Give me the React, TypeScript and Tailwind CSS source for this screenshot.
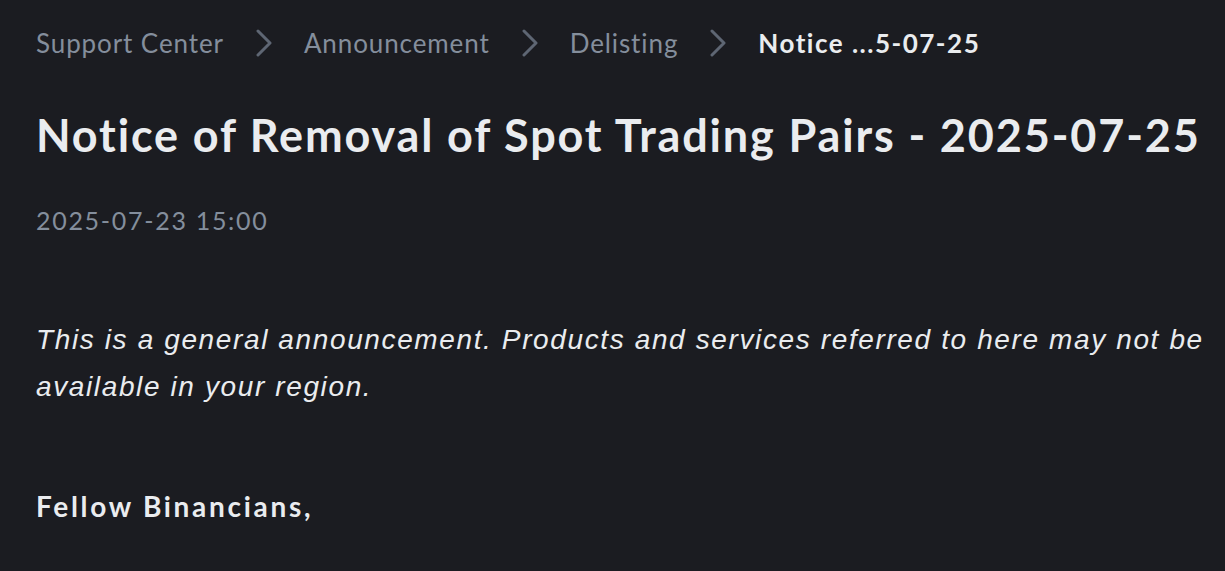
import React from 'react';

const Chevron = () => (
  <svg width="16" height="28" viewBox="0 0 16 28" fill="none" className="shrink-0">
    <path d="M2 2 L14 14 L2 26" stroke="#5E6673" strokeWidth="3" strokeLinecap="round" strokeLinejoin="round" />
  </svg>
);

const crumbs = ['Support Center', 'Announcement', 'Delisting'];

export default function App() {
  return (
    <div className="min-h-[571px] w-full bg-[#1b1c21] pl-[36px] pr-[16px] text-[#eaecef]" style={{ fontFamily: 'Lato, "Noto Sans", sans-serif' }}>
      {/* Breadcrumb */}
      <nav className="flex h-[86px] items-center gap-[32px] text-[26px] tracking-[0.9px]">
        {crumbs.map((c) => (
          <React.Fragment key={c}>
            <span className="text-[#848e9c]">{c}</span>
            <Chevron />
          </React.Fragment>
        ))}
        <span className="font-bold tracking-[1.5px] text-[#eaecef]">Notice ...5-07-25</span>
      </nav>

      {/* Title */}
      <h1 className="mt-[21px] text-[45px] font-bold leading-[56px] tracking-[1.85px]">
        Notice of Removal of Spot Trading Pairs - 2025-07-25
      </h1>

      <div className="mt-[41px] text-[25px] leading-[32px] tracking-[1.7px] text-[#848e9c]">2025-07-23 15:00</div>

      <p className="mt-[80px] text-[28px] italic leading-[47px] tracking-[1.62px]" style={{ fontFamily: '"Liberation Sans", Arial, sans-serif' }}>
        This is a general announcement. Products and services referred to here may not be available in your region.
      </p>

      <p className="mt-[73px] text-[28px] font-bold leading-[47px] tracking-[2.7px]">Fellow Binancians,</p>
    </div>
  );
}
